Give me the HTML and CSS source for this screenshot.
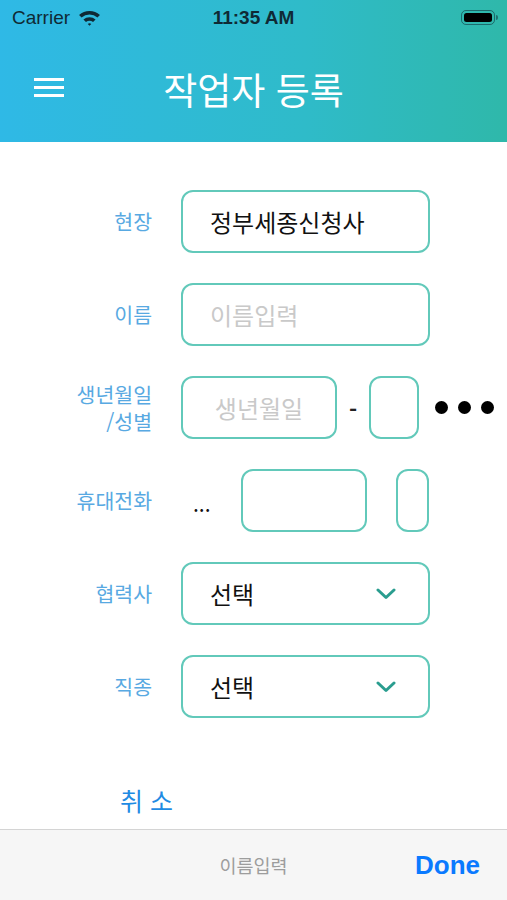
FILE: index.html
```html
<!DOCTYPE html>
<html lang="ko">
<head>
    <meta charset="UTF-8">
    <meta name="viewport" content="width=device-width, initial-scale=1.0">
    <title>작업자 등록</title>
    <link rel="stylesheet" href="styles.css">
</head>
<body>

    <header class="topbar">
        <div class="status">
            <div class="status-left">
                <span>Carrier</span>
                <svg class="wifi" width="23" height="17" viewBox="0 0 22 16">
                    <path d="M1 5.5 A15 15 0 0 1 21 5.5 L18.6 8 A11.6 11.6 0 0 0 3.4 8 Z" fill="#0f2a35"/>
                    <path d="M5.2 9.9 A9 9 0 0 1 16.8 9.9 L14.4 12.3 A5.6 5.6 0 0 0 7.6 12.3 Z" fill="#0f2a35"/>
                    <path d="M9.3 14.1 A3 3 0 0 1 12.7 14.1 L11 15.9 Z" fill="#0f2a35"/>
                </svg>
            </div>
            <div class="status-time">11:35 AM</div>
            <div class="status-right">
                <div class="battery"><div class="battery-fill"></div></div>
                <div class="battery-nub"></div>
            </div>
        </div>
        <div class="navbar">
            <div class="menu-btn">
                <span></span><span></span><span></span>
            </div>
            <h1>작업자 등록</h1>
        </div>
    </header>

    <main class="form">
        <div class="row">
            <label class="label">현장</label>
            <div class="field wide">정부세종신청사</div>
        </div>

        <div class="row">
            <label class="label">이름</label>
            <div class="field wide placeholder">이름입력</div>
        </div>

        <div class="row">
            <label class="label">생년월일<br>/성별</label>
            <div class="field birth placeholder">생년월일</div>
            <span class="dash">-</span>
            <div class="field gender"></div>
            <div class="dots"><i></i><i></i><i></i></div>
        </div>

        <div class="row">
            <label class="label">휴대전화</label>
            <span class="ellipsis">...</span>
            <div class="field phone"></div>
            <div class="field phone-end"></div>
        </div>

        <div class="row">
            <label class="label">협력사</label>
            <div class="field wide select">
                <span>선택</span>
                <svg class="chevron" width="20" height="12" viewBox="0 0 20 12">
                    <path d="M2 2 L10 9.5 L18 2" fill="none" stroke="#2a9d8f" stroke-width="3" stroke-linecap="round" stroke-linejoin="round"/>
                </svg>
            </div>
        </div>

        <div class="row">
            <label class="label">직종</label>
            <div class="field wide select">
                <span>선택</span>
                <svg class="chevron" width="20" height="12" viewBox="0 0 20 12">
                    <path d="M2 2 L10 9.5 L18 2" fill="none" stroke="#2a9d8f" stroke-width="3" stroke-linecap="round" stroke-linejoin="round"/>
                </svg>
            </div>
        </div>

        <div class="cancel">취 소</div>
    </main>

    <footer class="toolbar">
        <span class="toolbar-hint">이름입력</span>
        <span class="done">Done</span>
    </footer>

</body>
</html>
```

FILE: styles.css
```css
body {
    margin: 0;
    width: 507px;
    height: 900px;
    font-family: "Noto Sans CJK KR", "Noto Sans", sans-serif;
    background: white;
    display: flex;
    flex-direction: column;
    overflow: hidden;
}
.topbar {
    height: 142px;
    flex-shrink: 0;
    background: linear-gradient(90deg, #2fb9e6 0%, #2fbbc9 60%, #2fb8aa 100%);
    color: white;
}
.status {
    height: 35px;
    display: grid;
    grid-template-columns: 1fr auto 1fr;
    align-items: center;
    color: #0f2a35;
    font-family: "Liberation Sans", Arial, sans-serif;
    font-size: 19px;
}
.status-left {
    display: flex;
    align-items: center;
    gap: 8px;
    padding-left: 12px;
}
.status-time {
    font-weight: bold;
}
.status-right {
    display: flex;
    justify-content: flex-end;
    align-items: center;
    padding-right: 9px;
}
.battery {
    width: 34px;
    height: 15px;
    border: 1.5px solid rgba(15, 42, 53, 0.55);
    border-radius: 5px;
    padding: 2px;
    box-sizing: border-box;
}
.battery-fill {
    width: 100%;
    height: 100%;
    background: #000;
    border-radius: 2.5px;
}
.battery-nub {
    width: 2px;
    height: 5px;
    margin-left: 1px;
    background: rgba(15, 42, 53, 0.5);
    border-radius: 0 2px 2px 0;
}
.navbar {
    height: 107px;
    display: flex;
    align-items: center;
}
.menu-btn {
    margin-left: 34px;
    width: 30px;
    display: flex;
    flex-direction: column;
    gap: 5px;
    margin-top: -3px;
}
.menu-btn span {
    display: block;
    height: 3px;
    background: white;
}
.navbar h1 {
    flex: 1;
    margin: 0 0 0 -64px;
    text-align: center;
    font-size: 37px;
    font-weight: normal;
}
.form {
    flex: 1;
    padding-top: 48px;
    display: flex;
    flex-direction: column;
    gap: 30px;
}
.row {
    height: 63px;
    display: flex;
    align-items: center;
}
.label {
    width: 152px;
    margin-right: 29px;
    flex-shrink: 0;
    text-align: right;
    color: #58a9e2;
    font-size: 20.5px;
    line-height: 27px;
}
.field {
    height: 63px;
    box-sizing: border-box;
    border: 2px solid #62c9ba;
    border-radius: 12px;
    display: flex;
    align-items: center;
    padding-left: 27px;
    font-size: 24px;
    color: #111;
    flex-shrink: 0;
}
.wide {
    width: 249px;
}
.placeholder {
    color: #c9c9c9;
}
.birth {
    width: 156px;
    padding: 0;
    justify-content: center;
}
.dash {
    width: 32px;
    text-align: center;
    font-size: 22px;
    font-weight: bold;
    color: #222;
}
.gender {
    width: 50px;
    padding: 0;
}
.dots {
    display: flex;
    gap: 10px;
    margin-left: 16px;
}
.dots i {
    width: 13px;
    height: 13px;
    border-radius: 50%;
    background: #000;
}
.ellipsis {
    font-size: 21px;
    color: #111;
    width: 60px;
    padding-left: 12px;
    margin-top: 4px;
    box-sizing: border-box;
}
.phone {
    width: 126px;
    padding: 0;
}
.phone-end {
    width: 33px;
    margin-left: 29px;
    padding: 0;
}
.select {
    justify-content: space-between;
    padding-right: 32px;
}
.cancel {
    margin-top: 34px;
    padding-left: 120px;
    color: #1f8be3;
    font-size: 25px;
}
.toolbar {
    height: 71px;
    flex-shrink: 0;
    box-sizing: border-box;
    border-top: 1.5px solid #d4d4d4;
    background: #f6f6f6;
    display: flex;
    align-items: center;
    justify-content: center;
    position: relative;
}
.toolbar-hint {
    color: #9d9d9d;
    font-size: 18.5px;
}
.done {
    position: absolute;
    right: 27px;
    color: #0a7aff;
    font-family: "Liberation Sans", Arial, sans-serif;
    font-weight: bold;
    font-size: 26px;
}
```
